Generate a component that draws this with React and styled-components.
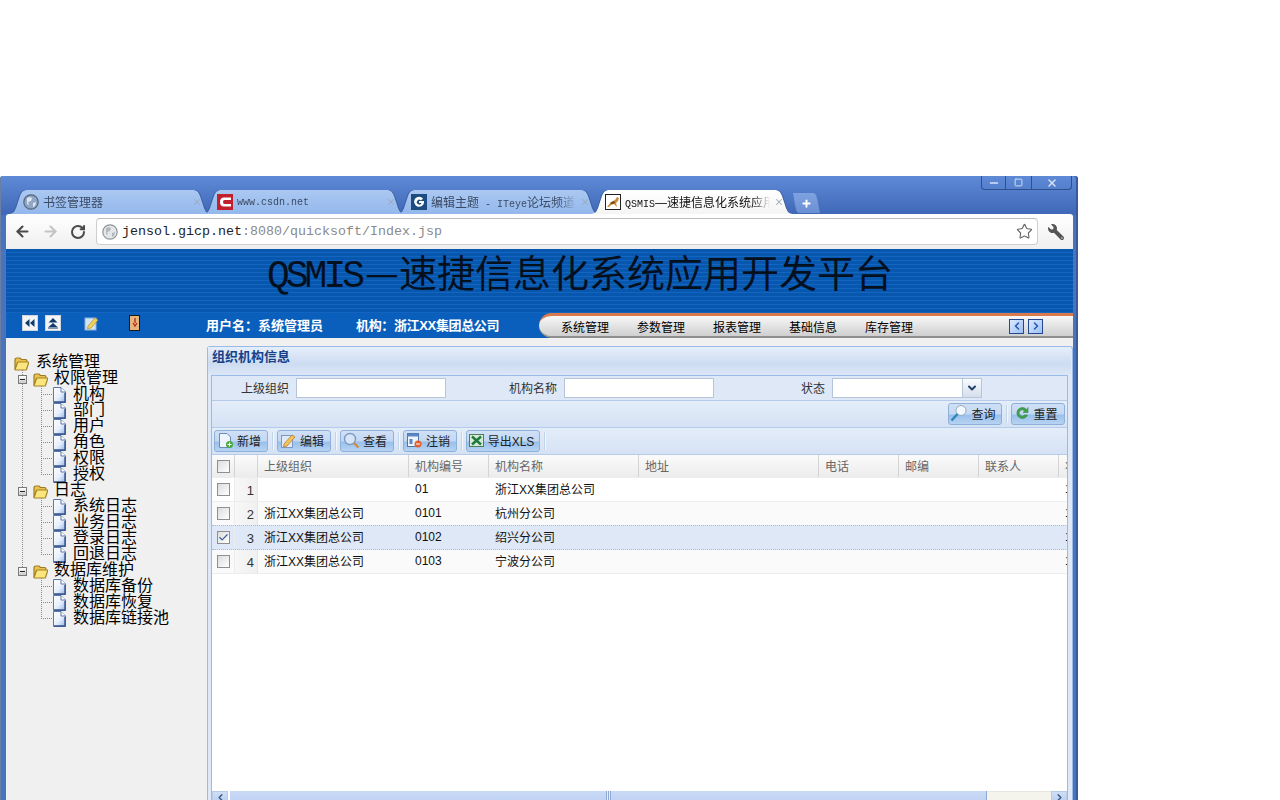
import React from 'react'
import styled, { createGlobalStyle } from 'styled-components'
import { ArrowLeft, ArrowRight, RotateCw, Star, Plus, Check, X, ChevronDown, ChevronLeft, ChevronRight, Minus, Square } from 'lucide-react'
import { FaWrench } from 'react-icons/fa'

const Global = createGlobalStyle`
    html, body { margin: 0; padding: 0; background: #fff; height: 800px; overflow: hidden; }
    body { font-family: 'Liberation Sans', 'Noto Sans CJK SC', sans-serif; font-size: 12px; color: #000; }
`

const Page = styled.div`
    padding-top: 176px;
    width: 1078px;
    height: 800px;
    box-sizing: border-box;
`

const Frame = styled.div`
    height: 624px;
    box-sizing: border-box;
    padding: 0 5px 0 6px;
    display: flex;
    flex-direction: column;
    border-radius: 3px 3px 0 0;
    overflow: hidden;
    background: linear-gradient(#5f8ad6 0, #3f69b8 38px, #4a73bd 40px, #4a73bd 100%);
    box-shadow: inset -2px 0 0 #3a5a9c, inset 1px 0 0 #6b7fa5;
`

const Controls = styled.div`
    height: 14px;
    align-self: flex-end;
    margin-right: 1px;
    display: flex;
    border: 1px solid #2f4f8f;
    border-top: 0;
    border-radius: 0 0 4px 4px;
    box-sizing: border-box;
`

const ControlCell = styled.div`
    width: ${p => p.$w}px;
    box-sizing: border-box;
    display: flex;
    align-items: center;
    justify-content: center;
    color: #d7e2f5;
    border-left: ${p => (p.$first ? '0' : '1px solid #2f4f8f')};
`

const TabStrip = styled.div`
    height: 24px;
    padding-left: 2px;
    display: flex;
`

const Tab = styled.div`
    width: 204px;
    height: 24px;
    margin-right: -10px;
    box-sizing: border-box;
    padding: 0 10px 1px 15px;
    display: flex;
    align-items: center;
    gap: 4px;
    color: ${p => (p.$active ? '#111' : '#3b4a63')};
    background: ${p => (p.$active ? 'linear-gradient(#fff, #f4f4f4)' : 'linear-gradient(#aac8f1, #94b8ec)')};
    clip-path: path('M0 24 C5 24 7 22 9 15 L12 6 C13.5 1.5 16 0 20 0 L184 0 C188 0 190.5 1.5 192 6 L195 15 C197 22 199 24 204 24 Z');
`

const TabShade = styled.div`
    display: flex;
    filter: drop-shadow(1px 0 0 #3a5f9f) drop-shadow(-1px 0 0 #3a5f9f);
`

const TabText = styled.span`
    flex: 1;
    min-width: 0;
    white-space: nowrap;
    overflow: hidden;
    padding-bottom: 1px;
    mask-image: ${p => (p.$fade ? 'linear-gradient(to right, #000 88%, transparent)' : 'none')};
`

const TabMono = styled.span`
    font-family: 'Liberation Mono', monospace;
    font-size: 10px;
`

const TabClose = styled(X)`
    flex: none;
    color: #9aa9c0;
`

const NewTab = styled.div`
    width: 27px;
    height: 20px;
    margin: 3px 0 0 9px;
    display: flex;
    align-items: center;
    justify-content: center;
    color: #fff;
    background: linear-gradient(#7ea2e0, #6b90d4);
    clip-path: path('M0 0 L20 0 C23 0 24 4 25 10 L27 20 L6 20 C4 20 3 17 2 12 Z');
`

const Toolbar = styled.div`
    height: 35px;
    display: flex;
    align-items: center;
    padding: 0 8px 0 2px;
    box-sizing: border-box;
    background: linear-gradient(#fff, #efefef);
    border-radius: 3px 3px 0 0;
`

const NavBtn = styled.div`
    width: 28px;
    height: 28px;
    display: flex;
    align-items: center;
    justify-content: center;
    color: ${p => (p.$off ? '#c4c4c4' : '#4a4a4a')};
`

const Omnibox = styled.div`
    width: 942px;
    height: 27px;
    margin-left: 4px;
    box-sizing: border-box;
    border: 1px solid #cfcfcf;
    border-top-color: #bcbcbc;
    border-radius: 4px;
    background: #fff;
    display: flex;
    align-items: center;
    padding: 0 4px 0 5px;
    gap: 4px;
    font-family: 'Liberation Mono', monospace;
    font-size: 13.33px;
    color: #222;
`

const UrlRest = styled.span`
    color: #8a8a8a;
`

const Url = styled.span`
    flex: 1;
    white-space: nowrap;
`

const WrenchBtn = styled(FaWrench)`
    margin-left: 10px;
    color: #555;
    transform: scaleX(-1);
`

const Banner = styled.div`
    height: 64px;
    box-sizing: border-box;
    padding: 0 0 14px 261px;
    display: flex;
    align-items: center;
    background: repeating-linear-gradient(#0757ae 0 3px, #1465bf 3px 4px);
    color: #05101f;
`

const Title = styled.h1`
    margin: 0;
    font-weight: normal;
    font-size: 38px;
    line-height: 44px;
    white-space: nowrap;
    font-family: 'Noto Sans CJK SC', sans-serif;
`

const TitleLatin = styled.span`
    font-family: 'Liberation Mono', monospace;
    letter-spacing: -4px;
    margin-right: 4px;
`

const NavBar = styled.div`
    height: 25px;
    display: flex;
    align-items: stretch;
    background: #0a5fbc;
    color: #fff;
`

const NavIcons = styled.div`
    width: 200px;
    display: flex;
    align-items: center;
    padding: 0 0 5px 16px;
    box-sizing: border-box;
`

const NavIcon = styled.div`
    margin-left: ${p => p.$ml || 0}px;
    display: flex;
`

const Who = styled.div`
    font-weight: bold;
    font-size: 13px;
    letter-spacing: ${p => (p.$tight ? '-0.35px' : '0')};
    margin-right: ${p => p.$mr || 0}px;
    align-self: center;
    padding-bottom: 2px;
    white-space: nowrap;
`

const Menu = styled.div`
    margin-left: auto;
    width: 534px;
    box-sizing: border-box;
    display: flex;
    align-items: center;
    gap: 28px;
    padding: 0 30px 0 22px;
    border-top: 3px solid #d97a4c;
    border-bottom: 2px solid #8e8e8e;
    border-radius: 14px 0 0 14px;
    background: linear-gradient(#f8f8f8, #cfcfcf);
    color: #000;
`

const MenuItem = styled.span`
    white-space: nowrap;
`

const Pager = styled.div`
    margin-left: auto;
    display: flex;
    gap: 4px;
`

const PagerBtn = styled.div`
    width: 15px;
    height: 15px;
    box-sizing: border-box;
    border: 1px solid #24478f;
    background: linear-gradient(135deg, #dbe9ff, #9dc0f3);
    color: #2257b4;
    display: flex;
    align-items: center;
    justify-content: center;
`

const Body = styled.div`
    flex: 1;
    min-height: 0;
    display: flex;
    background: #f0f0f0;
`

const Sidebar = styled.div`
    width: 201px;
    flex: none;
    padding-top: 16px;
    box-sizing: border-box;
`

const dotted = `repeating-linear-gradient(to bottom, #8a8a8a 0 1px, transparent 1px 2px)`
const dottedH = `repeating-linear-gradient(to right, #8a8a8a 0 1px, transparent 1px 2px)`

const TreeRow = styled.div`
    height: 16px;
    display: flex;
    align-items: center;
    padding-left: ${p => p.$pad}px;
    font-size: 16px;
    line-height: 16px;
    white-space: nowrap;
`

const Toggle = styled.div`
    width: 9px;
    height: 16px;
    flex: none;
    display: flex;
    align-items: center;
    justify-content: center;
    background: ${dotted} 4px 0 / 1px ${p => (p.$last ? '50%' : '100%')} no-repeat;
`

const ToggleBox = styled.div`
    width: 9px;
    height: 9px;
    margin-top: 2px;
    box-sizing: border-box;
    border: 1px solid #7a7a7a;
    background: linear-gradient(#fff, #c9c9c9);
    display: flex;
    align-items: center;
    justify-content: center;
    &::after { content: ''; width: 5px; height: 1px; background: #222; }
`

const OuterGuide = styled.div`
    width: 19px;
    height: 16px;
    flex: none;
    background: ${p => (p.$on ? `${dotted} 0 0 / 1px 100% no-repeat` : 'none')};
`

const Branch = styled.div`
    width: 12px;
    height: 16px;
    flex: none;
    background:
        ${dotted} 0 0 / 1px ${p => (p.$last ? '9px' : '100%')} no-repeat,
        ${dottedH} 0 8px / 100% 1px no-repeat;
`

const Label = styled.span`
    margin-left: ${p => p.$ml}px;
`

const Main = styled.div`
    flex: 1;
    min-width: 0;
    padding-top: 8px;
`

const Panel = styled.div`
    height: 100%;
    box-sizing: border-box;
    border: 1px solid #99bbe8;
    border-bottom: 0;
    border-radius: 3px 3px 0 0;
    background: #dfe8f6;
    padding: 0 4px 0 3px;
`

const PanelTitle = styled.div`
    height: 28px;
    margin: 0 -3px 0 -3px;
    padding: 0 0 11px 4px;
    box-sizing: border-box;
    display: flex;
    align-items: center;
    font-weight: bold;
    font-size: 13px;
    color: #15428b;
    background: linear-gradient(#e6eefa, #cddcf2 60%, #dce7f6);
`

const Inner = styled.div`
    border: 1px solid #99bbe8;
    border-bottom: 0;
    background: #fff;
`

const FormRow = styled.div`
    height: 24px;
    display: flex;
    align-items: center;
    background: #dfe8f6;
    border-bottom: 1px solid #b5cbe9;
`

const Field = styled.div`
    width: ${p => p.$w}px;
    flex: none;
    display: flex;
    justify-content: flex-end;
    align-items: center;
    gap: 7px;
    color: #333;
    white-space: nowrap;
`

const FieldLabel = styled.span`
    padding-bottom: 2px;
`

const Input = styled.div`
    width: 150px;
    height: 20px;
    box-sizing: border-box;
    border: 1px solid #b5c5da;
    background: #fff;
    display: flex;
    justify-content: flex-end;
`

const SelectArrow = styled.div`
    width: 18px;
    margin: -1px -1px -1px 0;
    border: 1px solid #b5c5da;
    background: linear-gradient(#fafcff, #d5deeb);
    color: #23406e;
    display: flex;
    align-items: center;
    justify-content: center;
`

const ActionRow = styled.div`
    height: 26px;
    display: flex;
    align-items: center;
    justify-content: ${p => (p.$end ? 'flex-end' : 'flex-start')};
    padding: 0 ${p => (p.$end ? 2 : 0)}px 0 2px;
    background: linear-gradient(#e4edf9, #d5e2f4);
    border-bottom: 1px solid #b5cbe9;
`

const ToolBtn = styled.div`
    width: ${p => p.$w}px;
    height: 22px;
    flex: none;
    box-sizing: border-box;
    padding: 0 4px 2px 0;
    border: 1px solid #8fb0d8;
    border-radius: 3px;
    background: linear-gradient(#cfe0f6, #c3d8f3 50%, #98c0ec 55%, #b7d3f2);
    display: flex;
    align-items: center;
    justify-content: center;
    gap: 3px;
    color: #222;
    white-space: nowrap;
`

const Sep = styled.div`
    width: 1px;
    height: 18px;
    margin: 0 4px 0 4px;
    background: #c2d4ea;
    box-shadow: 1px 0 0 #f2f7fd;
`

const Grid = styled.div`
    overflow: hidden;
`

const GridRow = styled.div`
    display: grid;
    grid-template-columns: 23px 23px 151px 80px 150px 180px 80px 80px 80px 80px;
    box-sizing: border-box;
    width: 1000px;
    color: ${p => (p.$head ? '#666' : '#111')};
    background: ${p => {
        if (p.$head) return 'linear-gradient(#fbfbfb, #ececec)'
        if (p.$selected) return '#dfe8f6'
        return p.$alt ? '#fafafa' : '#fff'
    }};
    border-bottom: ${p => (p.$selected ? '1px dotted #a3bae9' : '1px solid #ededed')};
    border-top: ${p => (p.$selected ? '1px dotted #a3bae9' : '0')};
    margin-top: ${p => (p.$selected ? '-1px' : '0')};
    height: ${p => (p.$head ? 23 : p.$selected ? 25 : 24)}px;
`

const Cell = styled.div`
    padding: 0 0 2px 6px;
    display: flex;
    align-items: center;
    white-space: nowrap;
    overflow: hidden;
    border-right: ${p => (p.$head ? '1px solid #d4d4d4' : '0')};
    box-sizing: border-box;
`

const CheckCell = styled.div`
    display: flex;
    align-items: center;
    justify-content: center;
    box-sizing: border-box;
    padding-left: 1px;
    border-right: 1px solid ${p => (p.$head ? '#d4d4d4' : '#ededed')};
`

const NumCell = styled.div`
    display: flex;
    align-items: center;
    justify-content: flex-end;
    padding: 2px 3px 0 0;
    font-size: 13px;
    box-sizing: border-box;
    color: #333;
    background: ${p => (p.$head ? 'none' : p.$selected ? '#dfe8f6' : 'linear-gradient(to right, #f7f7f7, #f0f0f0)')};
    border-right: 1px solid ${p => (p.$head ? '#d4d4d4' : '#e6e6e6')};
`

const Box = styled.div`
    width: 13px;
    height: 13px;
    box-sizing: border-box;
    border: 1px solid #8f8f8f;
    background: linear-gradient(135deg, #dcdcdc, #fff);
    display: flex;
    align-items: center;
    justify-content: center;
    color: #3b5a96;
`

const Filler = styled.div`
    height: 217px;
`

const ScrollBar = styled.div`
    height: 10px;
    display: flex;
    align-items: flex-start;
    background: #fff;
    overflow: hidden;
`

const ScrollEnd = styled.div`
    width: ${p => p.$w}px;
    height: 14px;
    flex: none;
    display: flex;
    align-items: flex-start;
    justify-content: center;
    color: #34578f;
    background: linear-gradient(#cfdef5, #b5ccee);
    border: 1px solid #b8cbe6;
    box-sizing: border-box;
`

const Thumb = styled.div`
    width: 756px;
    flex: none;
    height: 14px;
    margin-left: 2px;
    background: linear-gradient(#c9daf6, #bcd0f2);
    border-right: 1px solid #8fa9d2;
    display: flex;
    justify-content: center;
    &::after { content: ''; width: 5px; height: 10px; background: repeating-linear-gradient(to right, #8fa9d2 0 1px, #e6eefb 1px 2px); }
`

const Track = styled.div`
    flex: 1;
    height: 14px;
    background: #f5f4ec;
    border-top: 1px solid #e6e6e0;
    box-sizing: border-box;
`

const Globe = ({ light }) => (
    <svg width="16" height="16" viewBox="0 0 16 16" style={{ flex: 'none' }}>
        <circle cx="8" cy="8" r="7.2" fill={light ? '#e4e6e8' : '#8fa6c4'} stroke={light ? '#8f9498' : '#55647a'} strokeWidth="1.2" />
        <path d="M4 4 C6 3 8 3 9 4 L8 7 L5 8 L6 11 L4 10 Z M10 9 L13 8 L12 12 L10 13 Z" fill={light ? '#b4b8bc' : '#dfe7f2'} />
    </svg>
)

const CsdnIcon = () => (
    <svg width="16" height="16" viewBox="0 0 16 16" style={{ flex: 'none' }}>
        <rect width="16" height="16" fill="#c2202c" />
        <path d="M14 3.5 H7 Q3 3.5 3 8 Q3 12.5 7 12.5 H14 V10 H7.5 Q6 10 6 8 Q6 6 7.5 6 H14 Z" fill="#fff" />
    </svg>
)

const IteyeIcon = () => (
    <svg width="16" height="16" viewBox="0 0 16 16" style={{ flex: 'none' }}>
        <rect width="16" height="16" fill="#1e4c80" />
        <path d="M13 9 A5 5 0 1 1 12 4.5 L10 6.5 A2.4 2.4 0 1 0 10.5 9 Z" fill="#fff" />
        <rect x="8" y="7" width="5" height="2" fill="#fff" />
    </svg>
)

const TomcatIcon = () => (
    <svg width="16" height="16" viewBox="0 0 16 16" style={{ flex: 'none' }}>
        <rect x=".5" y=".5" width="15" height="15" fill="#fff" stroke="#222" />
        <path d="M2 13 L6 8 L10 6 L12 3 L14 4 L13 7 L11 9 L12 13 L9 10 L6 11 L4 13 Z" fill="#c98a3a" />
        <path d="M5 9 L9 7 L10 9 L7 10 Z" fill="#6d4a1c" />
    </svg>
)

const Folder = ({ ml = 0 }) => (
    <svg width="15" height="14" viewBox="0 0 15 14" style={{ flex: 'none', marginLeft: ml, marginTop: 3 }}>
        <path d="M1 12 V3 Q1 1 3 1 H6 L7.5 2.5 H11.5 Q13 2.5 13 4 V6 H4 Z" fill="#e9c24a" stroke="#9c7c22" strokeWidth="1.2" />
        <path d="M1 12.5 L3.5 5.5 Q3.7 5 4.5 5 H14 Q15 5 14.6 6 L12.5 12.5 Q12.3 13 11.5 13 H1.5 Z" fill="#fbe57e" stroke="#a5832a" strokeWidth="1.2" />
    </svg>
)

const PageIcon = () => (
    <svg width="13" height="16" viewBox="0 0 13 16" style={{ flex: 'none', marginTop: 1 }}>
        <defs>
            <linearGradient id="pagefill" x1="0" y1="0" x2="1" y2="1">
                <stop offset="0" stopColor="#fff" />
                <stop offset=".55" stopColor="#e6eefb" />
                <stop offset="1" stopColor="#8fb0e6" />
            </linearGradient>
        </defs>
        <path d="M.5 .5 H8 L12.5 5 V15.5 H.5 Z" fill="url(#pagefill)" stroke="#5c78ab" />
        <path d="M8 .5 V5 H12.5" fill="#fff" stroke="#5c78ab" />
        <path d="M12 6 V15 H1" fill="none" stroke="#34548f" strokeWidth="1.4" />
    </svg>
)

const SquareBtn = ({ d }) => (
    <svg width="16" height="16" viewBox="0 0 16 16">
        <rect x=".5" y=".5" width="15" height="15" fill="#f4f4f4" stroke="#cfd6df" />
        <path d={d} fill="#0d3b6e" />
    </svg>
)

const NoteIcon = () => (
    <svg width="15" height="16" viewBox="0 0 15 16">
        <rect x="1" y="3" width="11" height="12" fill="#cfe3f6" stroke="#8bb0d6" />
        <path d="M4 11 L11 3 L14 5 L7 13 L3.5 14 Z" fill="#f0cf5a" stroke="#b8902a" strokeWidth=".7" />
    </svg>
)

const DoorIcon = () => (
    <svg width="11" height="16" viewBox="0 0 11 16">
        <rect x=".5" y=".5" width="10" height="15" fill="#e7b47a" stroke="#1a1a1a" />
        <path d="M6 3 V8 M4 8 L6 11 L8 8" fill="none" stroke="#b02a1a" strokeWidth="1.3" />
    </svg>
)

const AddIcon = () => (
    <svg width="17" height="17" viewBox="0 0 17 17">
        <path d="M2.5 1.5 H10 L13.5 5 V15.5 H2.5 Z" fill="#eef4fc" stroke="#6d8cb8" />
        <circle cx="12.5" cy="12.5" r="3.5" fill="#49a83c" />
        <path d="M10.5 12.5 H14.5 M12.5 10.5 V14.5" stroke="#fff" />
    </svg>
)

const EditIcon = () => (
    <svg width="17" height="17" viewBox="0 0 17 17">
        <rect x="1.5" y="3.5" width="11" height="12" fill="#dfe9f6" stroke="#7e99c0" />
        <path d="M4 12 L12 3 L15 5 L7 14 L3.5 15 Z" fill="#eec55a" stroke="#c27a2a" strokeWidth=".8" />
    </svg>
)

const ViewIcon = () => (
    <svg width="17" height="17" viewBox="0 0 17 17">
        <circle cx="7" cy="7" r="5.5" fill="#d6e6f8" stroke="#7e99c0" strokeWidth="1.4" />
        <path d="M11 11 L15.5 15.5" stroke="#d28a3a" strokeWidth="2.2" />
    </svg>
)

const LogoutIcon = () => (
    <svg width="17" height="17" viewBox="0 0 17 17">
        <rect x="1.5" y="1.5" width="11" height="13" fill="#eef4fc" stroke="#4f74aa" />
        <rect x="1.5" y="1.5" width="11" height="3" fill="#5b86c4" />
        <rect x="3.5" y="7" width="3" height="5" fill="#5b86c4" />
        <circle cx="12" cy="12" r="3.5" fill="#e2602a" />
        <path d="M10 12 H14" stroke="#fff" />
    </svg>
)

const XlsIcon = () => (
    <svg width="17" height="17" viewBox="0 0 17 17">
        <rect x="1.5" y="2.5" width="14" height="12" fill="#d8e8d8" stroke="#4b7f58" />
        <path d="M4 4.5 L13 12.5 M13 4.5 L4 12.5" stroke="#1d7a3a" strokeWidth="2.4" />
    </svg>
)

const SearchIcon = () => (
    <svg width="18" height="18" viewBox="0 0 18 18">
        <circle cx="11" cy="6.5" r="5" fill="#f2f8ff" stroke="#98a8b8" />
        <path d="M7.5 10 L1.5 16.5" stroke="#2c86b8" strokeWidth="2.4" />
    </svg>
)

const ResetIcon = () => (
    <svg width="16" height="16" viewBox="0 0 16 16">
        <path d="M13 5 A5.5 5.5 0 1 0 13.5 10 H10.5 A3 3 0 1 1 10.5 6 L9 7.5 H14 V2.5 Z" fill="#3fa34a" stroke="#2b7d38" strokeWidth=".5" />
    </svg>
)

const tree = [
    { name: '权限管理', kids: ['机构', '部门', '用户', '角色', '权限', '授权'] },
    { name: '日志', kids: ['系统日志', '业务日志', '登录日志', '回退日志'] },
    { name: '数据库维护', kids: ['数据库备份', '数据库恢复', '数据库链接池'] },
]

const rows = [
    { n: 1, parent: '', code: '01', name: '浙江XX集团总公司' },
    { n: 2, parent: '浙江XX集团总公司', code: '0101', name: '杭州分公司', alt: true },
    { n: 3, parent: '浙江XX集团总公司', code: '0102', name: '绍兴分公司', selected: true },
    { n: 4, parent: '浙江XX集团总公司', code: '0103', name: '宁波分公司', alt: true },
]

const heads = ['上级组织', '机构编号', '机构名称', '地址', '电话', '邮编', '联系人', '状态']

const tools = [
    { label: '新增', w: 54, icon: <AddIcon /> },
    { label: '编辑', w: 54, icon: <EditIcon /> },
    { label: '查看', w: 54, icon: <ViewIcon /> },
    { label: '注销', w: 54, icon: <LogoutIcon /> },
    { label: '导出XLS', w: 74, icon: <XlsIcon /> },
]

export default function App() {
    return (
        <Page>
            <Global />
            <Frame>
                <Controls>
                    <ControlCell $first $w={23}><Minus size={12} strokeWidth={3} /></ControlCell>
                    <ControlCell $w={26}><Square size={9} strokeWidth={2.5} /></ControlCell>
                    <ControlCell $w={40}><X size={12} strokeWidth={3} /></ControlCell>
                </Controls>
                <TabStrip>
                    <TabShade>
                        <Tab><Globe /><TabText>书签管理器</TabText><TabClose size={10} strokeWidth={2.5} /></Tab>
                        <Tab><CsdnIcon /><TabText><TabMono>www.csdn.net</TabMono></TabText><TabClose size={10} strokeWidth={2.5} /></Tab>
                        <Tab><IteyeIcon /><TabText $fade>编辑主题<TabMono> - ITeye</TabMono>论坛频道</TabText><TabClose size={10} strokeWidth={2.5} /></Tab>
                        <Tab $active><TomcatIcon /><TabText $fade><TabMono>QSMIS</TabMono>—速捷信息化系统应用开发平台</TabText><TabClose size={10} strokeWidth={2.5} /></Tab>
                    </TabShade>
                    <NewTab><Plus size={11} strokeWidth={4} /></NewTab>
                </TabStrip>
                <Toolbar>
                    <NavBtn><ArrowLeft size={17} strokeWidth={3} /></NavBtn>
                    <NavBtn $off><ArrowRight size={17} strokeWidth={3} /></NavBtn>
                    <NavBtn><RotateCw size={16} strokeWidth={3} /></NavBtn>
                    <Omnibox>
                        <Globe light />
                        <Url>jensol.gicp.net<UrlRest>:8080/quicksoft/Index.jsp</UrlRest></Url>
                        <Star size={17} color="#666" strokeWidth={1.6} />
                    </Omnibox>
                    <WrenchBtn size={16} />
                </Toolbar>
                <Banner>
                    <Title><TitleLatin>QSMIS</TitleLatin>—速捷信息化系统应用开发平台</Title>
                </Banner>
                <NavBar>
                    <NavIcons>
                        <NavIcon><SquareBtn d="M7.5 4 V12 L3 8 Z M12.5 4 V12 L8 8 Z" /></NavIcon>
                        <NavIcon $ml={7}><SquareBtn d="M8 3 L12.5 7.5 H3.5 Z M8 8 L12.5 12 H3.5 Z M3 12.5 H13 V13.5 H3 Z" /></NavIcon>
                        <NavIcon $ml={23}><NoteIcon /></NavIcon>
                        <NavIcon $ml={30}><DoorIcon /></NavIcon>
                    </NavIcons>
                    <Who $mr={33}>用户名：系统管理员</Who>
                    <Who $tight>机构：浙江XX集团总公司</Who>
                    <Menu>
                        {['系统管理', '参数管理', '报表管理', '基础信息', '库存管理'].map(m => <MenuItem key={m}>{m}</MenuItem>)}
                        <Pager>
                            <PagerBtn><ChevronLeft size={12} strokeWidth={3} /></PagerBtn>
                            <PagerBtn><ChevronRight size={12} strokeWidth={3} /></PagerBtn>
                        </Pager>
                    </Menu>
                </NavBar>
                <Body>
                    <Sidebar>
                        <TreeRow $pad={8}><Folder /><Label $ml={7}>系统管理</Label></TreeRow>
                        {tree.map((group, gi) => {
                            const lastGroup = gi === tree.length - 1
                            return (
                                <React.Fragment key={group.name}>
                                    <TreeRow $pad={12}>
                                        <Toggle $last={lastGroup}><ToggleBox /></Toggle>
                                        <Folder ml={6} />
                                        <Label $ml={6}>{group.name}</Label>
                                    </TreeRow>
                                    {group.kids.map((kid, ki) => (
                                        <TreeRow $pad={16} key={kid}>
                                            <OuterGuide $on={!lastGroup} />
                                            <Branch $last={ki === group.kids.length - 1} />
                                            <PageIcon />
                                            <Label $ml={7}>{kid}</Label>
                                        </TreeRow>
                                    ))}
                                </React.Fragment>
                            )
                        })}
                    </Sidebar>
                    <Main>
                        <Panel>
                            <PanelTitle>组织机构信息</PanelTitle>
                            <Inner>
                                <FormRow>
                                    <Field $w={234}><FieldLabel>上级组织</FieldLabel><Input /></Field>
                                    <Field $w={268}><FieldLabel>机构名称</FieldLabel><Input /></Field>
                                    <Field $w={268}><FieldLabel>状态</FieldLabel><Input><SelectArrow><ChevronDown size={12} strokeWidth={4} /></SelectArrow></Input></Field>
                                </FormRow>
                                <ActionRow $end>
                                    <ToolBtn $w={54}><SearchIcon />查询</ToolBtn>
                                    <Sep />
                                    <ToolBtn $w={54}><ResetIcon />重置</ToolBtn>
                                </ActionRow>
                                <ActionRow>
                                    {tools.map(t => (
                                        <React.Fragment key={t.label}>
                                            <ToolBtn $w={t.w}>{t.icon}{t.label}</ToolBtn>
                                            <Sep />
                                        </React.Fragment>
                                    ))}
                                </ActionRow>
                                <Grid>
                                    <GridRow $head>
                                        <CheckCell $head><Box /></CheckCell>
                                        <NumCell $head />
                                        {heads.map(h => <Cell $head key={h}>{h}</Cell>)}
                                    </GridRow>
                                    {rows.map(r => (
                                        <GridRow key={r.n} $alt={r.alt} $selected={r.selected}>
                                            <CheckCell><Box>{r.selected && <Check size={11} strokeWidth={2.5} />}</Box></CheckCell>
                                            <NumCell $selected={r.selected}>{r.n}</NumCell>
                                            <Cell>{r.parent}</Cell>
                                            <Cell>{r.code}</Cell>
                                            <Cell>{r.name}</Cell>
                                            <Cell />
                                            <Cell />
                                            <Cell />
                                            <Cell />
                                            <Cell>1</Cell>
                                        </GridRow>
                                    ))}
                                    <Filler />
                                    <ScrollBar>
                                        <ScrollEnd $w={16}><ChevronLeft size={11} strokeWidth={3} /></ScrollEnd>
                                        <Thumb />
                                        <Track />
                                        <ScrollEnd $w={16}><ChevronRight size={11} strokeWidth={3} /></ScrollEnd>
                                    </ScrollBar>
                                </Grid>
                            </Inner>
                        </Panel>
                    </Main>
                </Body>
            </Frame>
        </Page>
    )
}
